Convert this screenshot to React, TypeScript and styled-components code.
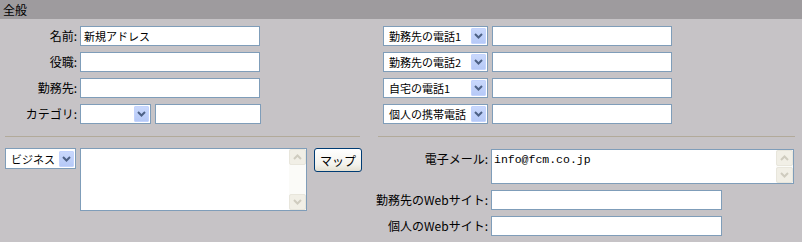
import styled, { createGlobalStyle } from 'styled-components';

const GlobalStyle = createGlobalStyle`
  html, body {
    margin: 0;
    padding: 0;
    background: #c6c3c6;
  }
  body {
    font-family: "Noto Sans CJK JP", "Noto Sans", sans-serif;
    font-size: 12px;
    color: #000;
  }
`;

const StyledPage = styled.div`
  width: 802px;
  height: 242px;
  background: #c6c3c6;
  overflow: hidden;
`;

const StyledHeader = styled.div`
  height: 19px;
  line-height: 19px;
  background: #9e9b9e;
  padding-left: 3px;
  font-size: 12px;
`;

const StyledColumns = styled.div`
  display: grid;
  grid-template-columns: 370px 432px;
`;

const StyledColumn = styled.div<{ $pad: number }>`
  display: flex;
  flex-direction: column;
  padding-top: 7px;
  padding-left: ${(p) => p.$pad}px;
`;

const StyledRows = styled.div`
  display: flex;
  flex-direction: column;
  gap: 6px;
`;

const StyledRow = styled.div`
  display: flex;
  align-items: center;
  height: 20px;
`;

const StyledLabel = styled.div<{ $width: number; $shift?: number }>`
  width: ${(p) => p.$width}px;
  margin-left: ${(p) => p.$shift ?? 0}px;
  text-align: right;
  white-space: nowrap;
  flex-shrink: 0;
  line-height: 20px;
  margin-right: 3px;
`;

const StyledInput = styled.div<{ $width: number }>`
  box-sizing: border-box;
  width: ${(p) => p.$width}px;
  height: 20px;
  border: 1px solid #7f9db9;
  background: #fff;
  padding: 0 3px;
  line-height: 18px;
  font-size: 11px;
  white-space: nowrap;
  overflow: hidden;
`;

const StyledSelect = styled.div<{ $width: number; $height?: number }>`
  box-sizing: border-box;
  width: ${(p) => p.$width}px;
  height: ${(p) => p.$height ?? 20}px;
  border: 1px solid #7f9db9;
  background: #fff;
  display: flex;
  align-items: center;
  padding: 1px;
  margin-right: 4px;
  flex-shrink: 0;
`;

const StyledSelectText = styled.div`
  flex: 1;
  padding-left: 4px;
  white-space: nowrap;
  overflow: hidden;
  font-size: 11px;
  line-height: 16px;
`;

const StyledArrow = styled.div`
  box-sizing: border-box;
  width: 15px;
  height: 16px;
  border: 1px solid #c3d3fd;
  border-radius: 1px;
  background: linear-gradient(180deg, #c9d8fc 0%, #b6c9f7 100%);
  display: flex;
  align-items: center;
  justify-content: center;
  flex-shrink: 0;
`;

const StyledDivider = styled.div<{ $width: number; $shift: number }>`
  width: ${(p) => p.$width}px;
  height: 1px;
  background: #b2aa9a;
  margin: 12px 0 12px ${(p) => p.$shift}px;
`;

const StyledBottom = styled.div`
  display: flex;
  align-items: flex-start;
  padding-left: 5px;
  margin-top: -1px;
`;

const StyledTextArea = styled.div<{ $width: number; $height: number }>`
  box-sizing: border-box;
  width: ${(p) => p.$width}px;
  height: ${(p) => p.$height}px;
  border: 1px solid #7f9db9;
  background: #fff;
  display: flex;
  flex-shrink: 0;
`;

const StyledTextContent = styled.div`
  flex: 1;
  padding: 2px 2px;
  font-family: "Liberation Mono", monospace;
  font-size: 11.5px;
  line-height: 16px;
`;

const StyledScrollbar = styled.div`
  width: 17px;
  display: flex;
  flex-direction: column;
  justify-content: space-between;
  background: #fbfbf8;
`;

const StyledScrollButton = styled.div`
  box-sizing: border-box;
  width: 17px;
  height: 16px;
  border: 1px solid #e8e6dc;
  border-radius: 2px;
  background: #f1efe6;
  display: flex;
  align-items: center;
  justify-content: center;
`;

const StyledButton = styled.div`
  box-sizing: border-box;
  width: 48px;
  height: 24px;
  margin-left: 7px;
  border: 1px solid #003c74;
  border-radius: 3px;
  background: linear-gradient(180deg, #ffffff 0%, #f3f2ec 70%, #e3e0d2 100%);
  display: flex;
  align-items: center;
  justify-content: center;
  font-size: 12px;
`;

const StyledStack = styled.div`
  display: flex;
  flex-direction: column;
  gap: 6px;
`;

const StyledTopRow = styled.div`
  display: flex;
  align-items: flex-start;
`;

function Chevron({ color = '#4d6185', up = false }: { color?: string; up?: boolean }) {
  return (
    <svg width="9" height="6" viewBox="0 0 9 6">
      <path
        d={up ? 'M1 5 L4.5 1.5 L8 5' : 'M1 1 L4.5 4.5 L8 1'}
        fill="none"
        stroke={color}
        strokeWidth="2"
      />
    </svg>
  );
}

function Select({ text, width, height }: { text: string; width: number; height?: number }) {
  return (
    <StyledSelect $width={width} $height={height}>
      <StyledSelectText>{text}</StyledSelectText>
      <StyledArrow>
        <Chevron />
      </StyledArrow>
    </StyledSelect>
  );
}

function TextArea({ width, height, text }: { width: number; height: number; text?: string }) {
  return (
    <StyledTextArea $width={width} $height={height}>
      <StyledTextContent>{text}</StyledTextContent>
      <StyledScrollbar>
        <StyledScrollButton>
          <Chevron up color="#cfccbf" />
        </StyledScrollButton>
        <StyledScrollButton>
          <Chevron color="#cfccbf" />
        </StyledScrollButton>
      </StyledScrollbar>
    </StyledTextArea>
  );
}

const phones = ['勤務先の電話1', '勤務先の電話2', '自宅の電話1', '個人の携帯電話'];

export default function App() {
  return (
    <StyledPage>
      <GlobalStyle />
      <StyledHeader>全般</StyledHeader>
      <StyledColumns>
        <StyledColumn $pad={0}>
          <StyledRows>
            <StyledRow>
              <StyledLabel $width={77}>名前:</StyledLabel>
              <StyledInput $width={180}>新規アドレス</StyledInput>
            </StyledRow>
            <StyledRow>
              <StyledLabel $width={77}>役職:</StyledLabel>
              <StyledInput $width={180} />
            </StyledRow>
            <StyledRow>
              <StyledLabel $width={77}>勤務先:</StyledLabel>
              <StyledInput $width={180} />
            </StyledRow>
            <StyledRow>
              <StyledLabel $width={77}>カテゴリ:</StyledLabel>
              <Select text="" width={71} />
              <StyledInput $width={106} />
            </StyledRow>
          </StyledRows>
          <StyledDivider $width={355} $shift={5} />
          <StyledBottom>
            <Select text="ビジネス" width={71} height={21} />
            <TextArea width={227} height={63} />
            <StyledButton>マップ</StyledButton>
          </StyledBottom>
        </StyledColumn>
        <StyledColumn $pad={13}>
          <StyledRows>
            {phones.map((p) => (
              <StyledRow key={p}>
                <Select text={p} width={105} />
                <StyledInput $width={180} />
              </StyledRow>
            ))}
          </StyledRows>
          <StyledDivider $width={417} $shift={-5} />
          <StyledStack>
            <StyledTopRow>
              <StyledLabel $width={118} $shift={-13}>電子メール:</StyledLabel>
              <TextArea width={303} height={35} text="info@fcm.co.jp" />
            </StyledTopRow>
            <StyledRow>
              <StyledLabel $width={118} $shift={-13}>勤務先のWebサイト:</StyledLabel>
              <StyledInput $width={231} />
            </StyledRow>
            <StyledRow>
              <StyledLabel $width={118} $shift={-13}>個人のWebサイト:</StyledLabel>
              <StyledInput $width={231} />
            </StyledRow>
          </StyledStack>
        </StyledColumn>
      </StyledColumns>
    </StyledPage>
  );
}
